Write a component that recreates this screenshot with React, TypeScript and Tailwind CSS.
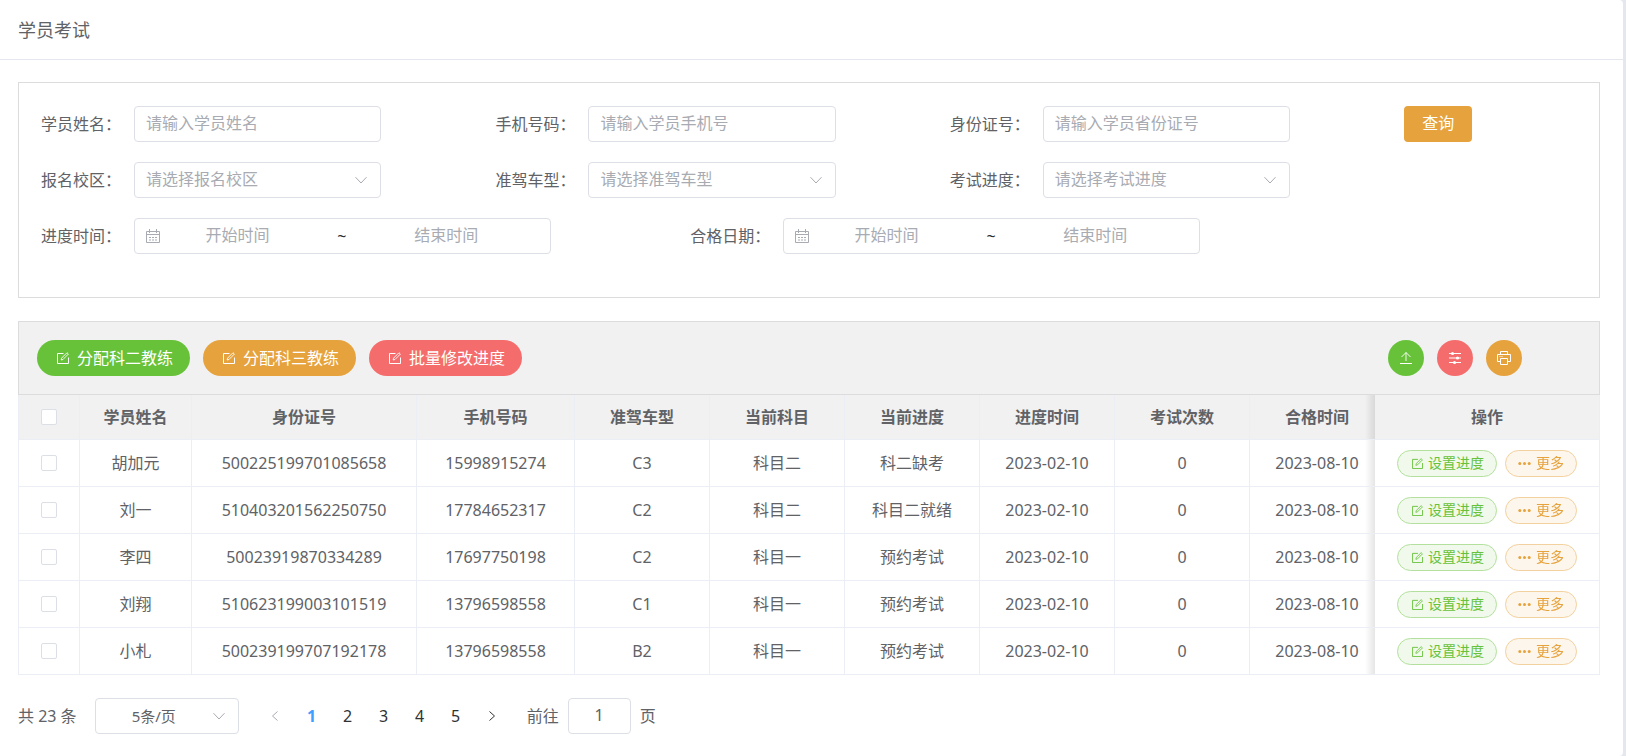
import { useState } from 'react';
import type { ReactNode } from 'react';

interface Student {
  name: string;
  idCard: string;
  phone: string;
  carType: string;
  subject: string;
  progress: string;
  progressDate: string;
  examCount: number;
  passDate: string;
}

const students: Student[] = [
  { name: '胡加元', idCard: '500225199701085658', phone: '15998915274', carType: 'C3', subject: '科目二', progress: '科二缺考', progressDate: '2023-02-10', examCount: 0, passDate: '2023-08-10' },
  { name: '刘一', idCard: '510403201562250750', phone: '17784652317', carType: 'C2', subject: '科目二', progress: '科目二就绪', progressDate: '2023-02-10', examCount: 0, passDate: '2023-08-10' },
  { name: '李四', idCard: '50023919870334289', phone: '17697750198', carType: 'C2', subject: '科目一', progress: '预约考试', progressDate: '2023-02-10', examCount: 0, passDate: '2023-08-10' },
  { name: '刘翔', idCard: '510623199003101519', phone: '13796598558', carType: 'C1', subject: '科目一', progress: '预约考试', progressDate: '2023-02-10', examCount: 0, passDate: '2023-08-10' },
  { name: '小札', idCard: '500239199707192178', phone: '13796598558', carType: 'B2', subject: '科目一', progress: '预约考试', progressDate: '2023-02-10', examCount: 0, passDate: '2023-08-10' },
];

const columns = [
  { label: '学员姓名', width: 'w-[112px]' },
  { label: '身份证号', width: 'w-[225px]' },
  { label: '手机号码', width: 'w-[158px]' },
  { label: '准驾车型', width: 'w-[135px]' },
  { label: '当前科目', width: 'w-[135px]' },
  { label: '当前进度', width: 'w-[135px]' },
  { label: '进度时间', width: 'w-[135px]' },
  { label: '考试次数', width: 'w-[135px]' },
  { label: '合格时间', width: 'w-[135px]' },
];

const cell = 'border-r border-b border-[#ebeef5] p-0 text-center';
// Fixed right column, with a soft shade over the scrolled content beside it
const fixedCell =
  "sticky right-0 border-r border-b border-[#ebeef5] p-0 text-center before:absolute before:inset-y-0 before:right-full before:w-[10px] before:bg-linear-to-l before:from-black/10 before:to-transparent before:content-['']";
const checkbox =
  'block mx-auto size-4 appearance-none rounded-xs border border-[#dcdfe6] bg-white checked:border-[#409eff] checked:bg-[#409eff]';
const field =
  'block h-9 w-full min-w-0 rounded border border-[#dcdfe6] bg-white px-[11px] pb-[2px] text-base text-[#606266] outline-none placeholder:text-[#a8abb2] focus:border-[#409eff]';

function EditIcon({ className }: { className: string }) {
  return (
    <svg viewBox="0 0 12 12" className={className} fill="none" stroke="currentColor" aria-hidden="true">
      <path d="M6.5 1.5h-6v10h11v-6" />
      <path d="M4.2 8l.4-1.9L10 .7l1.4 1.3L6 7.5z" strokeWidth="0.9" />
    </svg>
  );
}

function ChevronIcon({ className }: { className: string }) {
  return (
    <svg viewBox="0 0 14 14" className={className} fill="none" stroke="#a8abb2" aria-hidden="true">
      <path d="M1.5 4.2L7 10l5.500-5.800" />
    </svg>
  );
}

function CalendarIcon() {
  return (
    <svg viewBox="0 0 14 14" className="size-[14px] shrink-0" fill="none" stroke="#a8abb2" aria-hidden="true">
      <path d="M.5 2.500h13v11H.5zM.5 5.500h13M3.500 0v4M10.500 0v4" />
      <path d="M3 8.500h2M6 8.500h2M9 8.500h2M3 11h2M6 11h2M9 11h2" />
    </svg>
  );
}

function FormItem({ id, label, children }: { id: string; label: string; children: ReactNode }) {
  return (
    <div className="flex items-center">
      <label htmlFor={id} className="w-[93px] shrink-0 leading-9">
        {label}：
      </label>
      <div className="relative min-w-0 flex-1">{children}</div>
    </div>
  );
}

function TextItem({ id, label, placeholder }: { id: string; label: string; placeholder: string }) {
  return (
    <FormItem id={id} label={label}>
      <input id={id} type="text" placeholder={placeholder} className={field} />
    </FormItem>
  );
}

function SelectItem({ id, label, placeholder }: { id: string; label: string; placeholder: string }) {
  return (
    <FormItem id={id} label={label}>
      <select
        id={id}
        defaultValue=""
        className="block h-9 w-full appearance-none rounded border border-[#dcdfe6] bg-white pr-8 pb-[2px] pl-[11px] text-base text-[#a8abb2] outline-none focus:border-[#409eff]"
      >
        <option value="">{placeholder}</option>
      </select>
      <ChevronIcon className="pointer-events-none absolute top-[11px] right-[13px] size-[14px]" />
    </FormItem>
  );
}

function DateRangeItem({ id, label }: { id: string; label: string }) {
  const input =
    'w-0 min-w-0 flex-1 bg-transparent pb-[2px] text-center text-base text-[#606266] outline-none placeholder:text-[#a8abb2]';

  return (
    <FormItem id={id} label={label}>
      <div className="flex h-9 items-center rounded border border-[#dcdfe6] bg-white pr-[26px] pl-[11px]">
        <CalendarIcon />
        <input id={id} type="text" placeholder="开始时间" className={input} />
        <span className="w-[54px] text-center text-[#303133]">~</span>
        <input type="text" placeholder="结束时间" aria-label={`${label}结束时间`} className={input} />
      </div>
    </FormItem>
  );
}

function SearchForm() {
  return (
    <form
      className="grid grid-cols-[7fr_1fr] border border-[#dcdcdf] pt-[23px] pb-[43px] pl-[22px]"
      onSubmit={(e) => e.preventDefault()}
    >
      <div className="flex flex-col gap-5">
        <div className="grid grid-cols-3 gap-y-5 *:w-[74.9%]">
          <TextItem id="name" label="学员姓名" placeholder="请输入学员姓名" />
          <TextItem id="phone" label="手机号码" placeholder="请输入学员手机号" />
          <TextItem id="idCard" label="身份证号" placeholder="请输入学员省份证号" />
          <SelectItem id="campus" label="报名校区" placeholder="请选择报名校区" />
          <SelectItem id="carType" label="准驾车型" placeholder="请选择准驾车型" />
          <SelectItem id="progress" label="考试进度" placeholder="请选择考试进度" />
        </div>
        <div className="grid grid-cols-[10fr_10fr_1fr] *:w-[78.5%]">
          <DateRangeItem id="progressDate" label="进度时间" />
          <DateRangeItem id="passDate" label="合格日期" />
        </div>
      </div>
      <div>
        <button type="submit" className="h-9 rounded bg-[#e6a23c] px-[18px] pb-[2px] text-base text-white">
          查询
        </button>
      </div>
    </form>
  );
}

function Toolbar() {
  const pill = 'flex h-9 items-center gap-2 rounded-full pr-[17px] pl-5 text-base text-white';
  const round = 'flex size-9 items-center justify-center rounded-full text-white';

  return (
    <div className="flex items-center justify-between border border-[#dcdcdf] bg-[#f1f1f1] py-[18px] pr-[77px] pl-[18px]">
      <div className="flex gap-[13px]">
        <button type="button" className={`${pill} bg-[#67c23a]`}>
          <EditIcon className="size-3" />
          分配科二教练
        </button>
        <button type="button" className={`${pill} bg-[#e6a23c]`}>
          <EditIcon className="size-3" />
          分配科三教练
        </button>
        <button type="button" className={`${pill} bg-[#f56c6c]`}>
          <EditIcon className="size-3" />
          批量修改进度
        </button>
      </div>
      <div className="flex gap-[13px]">
        <button type="button" aria-label="导出" className={`${round} bg-[#67c23a]`}>
          <svg viewBox="0 0 14 14" className="size-[14px]" fill="none" stroke="currentColor" aria-hidden="true">
            <path d="M1 12.500h12" />
            <path d="M7 10V1.500M2.500 6L7 1.500 11.500 6" strokeWidth="0.9" />
          </svg>
        </button>
        <button type="button" aria-label="筛选" className={`${round} bg-[#f56c6c]`}>
          <svg viewBox="0 0 14 14" className="size-[14px]" stroke="currentColor" aria-hidden="true">
            <path d="M1 2.500h12M1 7h12M1 11.500h12" fill="none" />
            <g fill="currentColor" stroke="none">
              <circle cx="4.500" cy="2.500" r="1.600" />
              <circle cx="9.500" cy="7" r="1.600" />
              <circle cx="6.500" cy="11.500" r="1.600" />
            </g>
          </svg>
        </button>
        <button type="button" aria-label="打印" className={`${round} bg-[#e6a23c]`}>
          <svg viewBox="0 0 14 14" className="size-[14px]" fill="none" stroke="currentColor" aria-hidden="true">
            <path d="M3.500 10.500h-3v-7h13v7h-3M3.500 3.500v-3h7v3M3.500 7.500h7v6h-7z" />
            <path d="M2.500 5.500h1M4.500 5.500h1" />
          </svg>
        </button>
      </div>
    </div>
  );
}

function StudentTable() {
  const [selected, setSelected] = useState<Set<string>>(new Set());

  const toggle = (id: string) => {
    const next = new Set(selected);
    if (next.has(id)) {
      next.delete(id);
    } else {
      next.add(id);
    }
    setSelected(next);
  };

  const allSelected = selected.size === students.length;

  return (
    <div className="overflow-x-auto border-l border-[#ebeef5] [scrollbar-width:none]">
      <table className="w-full min-w-[1591px] table-fixed border-separate border-spacing-0">
        <thead>
          <tr className="h-[45px] bg-[#f1f1f1] text-[#606266]">
            <th className={`${cell} w-[61px]`}>
              <input
                type="checkbox"
                aria-label="全选"
                className={checkbox}
                checked={allSelected}
                onChange={() => setSelected(allSelected ? new Set() : new Set(students.map((s) => s.idCard)))}
              />
            </th>
            {columns.map((column) => (
              <th key={column.label} className={`${cell} ${column.width} font-bold`}>
                {column.label}
              </th>
            ))}
            <th className={`${fixedCell} w-[225px] bg-[#f1f1f1] font-bold`}>操作</th>
          </tr>
        </thead>
        <tbody>
          {students.map((s) => (
            <tr key={s.idCard} className="h-[47px]">
              <td className={cell}>
                <input
                  type="checkbox"
                  aria-label={`选择${s.name}`}
                  className={checkbox}
                  checked={selected.has(s.idCard)}
                  onChange={() => toggle(s.idCard)}
                />
              </td>
              <td className={cell}>{s.name}</td>
              <td className={cell}>{s.idCard}</td>
              <td className={cell}>{s.phone}</td>
              <td className={cell}>{s.carType}</td>
              <td className={cell}>{s.subject}</td>
              <td className={cell}>{s.progress}</td>
              <td className={cell}>{s.progressDate}</td>
              <td className={cell}>{s.examCount}</td>
              <td className={cell}>{s.passDate}</td>
              <td className={`${fixedCell} bg-white`}>
                <div className="flex items-center justify-center gap-2 text-sm">
                  <button
                    type="button"
                    className="flex h-[27px] items-center gap-[5px] rounded-full border border-[#b3e19d] bg-[#f0f9eb] pr-3 pl-[14px] text-[#67c23a]"
                  >
                    <EditIcon className="size-[11px]" />
                    设置进度
                  </button>
                  <button
                    type="button"
                    className="flex h-[27px] items-center gap-[5px] rounded-full border border-[#f3d19e] bg-[#fdf6ec] px-3 text-[#e6a23c]"
                  >
                    <svg viewBox="0 0 13 13" className="size-[13px]" fill="currentColor" aria-hidden="true">
                      <circle cx="1.800" cy="6.500" r="1.500" />
                      <circle cx="6.500" cy="6.500" r="1.500" />
                      <circle cx="11.200" cy="6.500" r="1.500" />
                    </svg>
                    更多
                  </button>
                </div>
              </td>
            </tr>
          ))}
        </tbody>
      </table>
    </div>
  );
}

function Pagination() {
  const [page, setPage] = useState(1);

  return (
    <nav aria-label="分页" className="mt-[23px] flex items-center">
      <span>共 23 条</span>
      <div className="relative ml-[18px]">
        <select
          aria-label="每页条数"
          className="block h-9 w-36 appearance-none rounded border border-[#dcdfe6] bg-white pl-9 text-[15px] text-[#606266] outline-none"
        >
          <option>5条/页</option>
          <option>10条/页</option>
        </select>
        <ChevronIcon className="pointer-events-none absolute top-[11px] right-[13px] size-[14px]" />
      </div>
      <div className="ml-[19px] flex text-[#303133] *:h-8 *:w-9">
        <button
          type="button"
          aria-label="上一页"
          disabled={page === 1}
          onClick={() => setPage(page - 1)}
          className="flex items-center justify-center disabled:text-[#a8abb2]"
        >
          <svg viewBox="0 0 12 12" className="size-3" fill="none" stroke="currentColor" aria-hidden="true">
            <path d="M7.500 1.500L2.500 6l5 4.500" />
          </svg>
        </button>
        {[1, 2, 3, 4, 5].map((n) => (
          <button
            key={n}
            type="button"
            onClick={() => setPage(n)}
            className={n === page ? 'font-bold text-[#409eff]' : ''}
          >
            {n}
          </button>
        ))}
        <button
          type="button"
          aria-label="下一页"
          disabled={page === 5}
          onClick={() => setPage(page + 1)}
          className="flex items-center justify-center disabled:text-[#a8abb2]"
        >
          <svg viewBox="0 0 12 12" className="size-3" fill="none" stroke="currentColor" aria-hidden="true">
            <path d="M3.500 1.500l5 4.500-5 4.500" />
          </svg>
        </button>
      </div>
      <label htmlFor="jump" className="ml-[17px]">
        前往
      </label>
      <input
        id="jump"
        type="text"
        value={page}
        onChange={(e) => setPage(Math.min(5, Math.max(1, Number(e.target.value) || 1)))}
        className="mx-[9px] h-9 w-[63px] rounded border border-[#dcdfe6] bg-white pb-[2px] text-center text-base outline-none"
      />
      <span>页</span>
    </nav>
  );
}

export default function App() {
  return (
    <div className="min-h-screen bg-[#e4e7ed] pr-[3px] font-['Noto_Sans','Noto_Sans_CJK_SC',sans-serif] text-base text-[#606266]">
      <div className="min-h-screen rounded-r bg-white">
        <header className="border-b border-[#e4e7ed] px-[18px] pt-[17px] pb-[15px]">
          <h1 className="text-lg leading-[27px]">学员考试</h1>
        </header>
        <main className="pt-[22px] pr-[23px] pb-[22px] pl-[18px]">
          <SearchForm />
          <div className="mt-[23px]">
            <Toolbar />
            <StudentTable />
          </div>
          <Pagination />
        </main>
      </div>
    </div>
  );
}
